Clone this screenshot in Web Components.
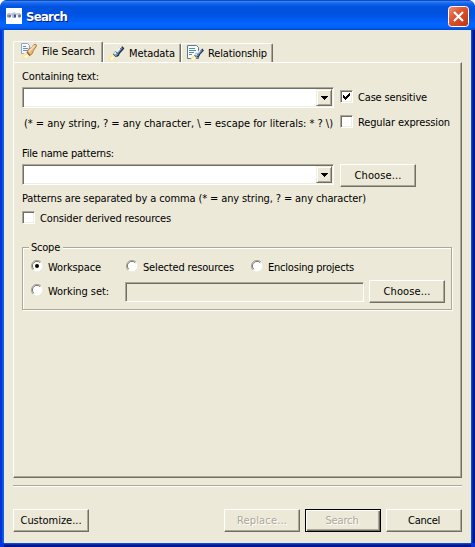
<!DOCTYPE html>
<html lang="en"><head><meta charset="utf-8"><title>Search</title>
<style>
html,body{margin:0;background:#fff;overflow:hidden}
body{font:11px/14px "DejaVu Sans Condensed","DejaVu Sans",sans-serif;font-stretch:condensed;color:#000}
</style></head><body>
<search-dialog></search-dialog>
<script>
const define=(name,html,init)=>customElements.define(name,class extends HTMLElement{
  connectedCallback(){
    if(this.shadowRoot)return;
    this.attachShadow({mode:'open'}).innerHTML=html;
    if(init)init.call(this,this.shadowRoot);
  }
});

/* text label whose tracking is adjusted to a given width */
define('fit-text',`<style>:host{display:block;white-space:pre;flex:none}span{display:inline-block}</style><span></span>`,function(r){
  const s=r.querySelector('span'),t=this.getAttribute('text'),w=+this.getAttribute('w');
  s.textContent=t;
  this.style.width=w+'px';
  const n=s.getBoundingClientRect().width;
  s.style.letterSpacing=((w-n)/t.length)+'px';
});

define('push-button',`<style>
:host{display:flex;box-sizing:border-box;width:76px;height:23px;align-items:center;justify-content:center;flex:none;background:#ece9d8;border:1px solid;border-color:#fff #716f64 #716f64 #fff;box-shadow:inset -1px -1px #aca899}
:host([disabled]){color:#aca899;text-shadow:1px 1px #fff}
:host([default]){border-color:#000;box-shadow:inset 1px 1px #fff,inset -1px -1px #716f64,inset -2px -2px #aca899}
</style><slot></slot>`);

define('combo-box',`<style>
:host{display:flex;box-sizing:border-box;width:312px;height:21px;flex:none;background:#fff;border:1px solid;border-color:#aca899 #fff #fff #aca899;box-shadow:inset 1px 1px #716f64,inset -1px -1px #f1efe2;padding:1px;justify-content:flex-end}
i{box-sizing:border-box;width:16px;height:17px;background:#ece9d8;border:1px solid;border-color:#f1efe2 #716f64 #716f64 #f1efe2;box-shadow:inset 1px 1px #fff,inset -1px -1px #aca899;display:flex;align-items:center;justify-content:center}
</style><i><svg width="7" height="4" shape-rendering="crispEdges"><path d="M0 0H7V1H6V2H5V3H4V4H3V3H2V2H1V1H0Z"/></svg></i>`);

define('check-option',`<style>
:host{display:flex;align-items:center;gap:5px;flex:none;height:14px}
b{box-sizing:border-box;width:13px;height:13px;margin-top:-3px;background:#fff;border:1px solid;border-color:#aca899 #fff #fff #aca899;box-shadow:inset 1px 1px #716f64,inset -1px -1px #f1efe2}
svg{display:none}:host([checked]) svg{display:block}
</style><b><svg width="11" height="11" shape-rendering="crispEdges"><path d="M2 4h1v1h1v1h1v-1h1v-1h1v-1h1v-1h1v3h-1v1h-1v1h-1v1h-1v1h-1v-1h-1v-1h-1z"/></svg></b><slot></slot>`);

define('radio-option',`<style>
:host{display:flex;align-items:center;gap:5px;flex:none;height:14px}
svg{display:block;margin-top:-4px}circle.dot{display:none}:host([checked]) .dot{display:inline}
</style><svg width="12" height="12"><circle cx="6" cy="6" r="5.4" fill="#fff"/><path d="M2 10A5.5 5.5 0 0 1 10 2" fill="none" stroke="#aca899"/><path d="M2.7 9.2A4.5 4.5 0 0 1 9.2 2.7" fill="none" stroke="#716f64"/><circle class="dot" cx="6" cy="6" r="2"/></svg><slot></slot>`);

define('group-box',`<style>
:host{display:block;box-sizing:border-box;border:1px solid #aca899;box-shadow:1px 1px #fff,inset 1px 1px #fff;position:relative}
slot[name=title]{display:block;position:absolute;left:6px;top:-6px;background:#ece9d8;padding:0 3px 0 2px;line-height:12px}
</style><slot name="title"></slot><slot></slot>`);

const torch='<path d="M0 15L2 11L5 9L8 12L5 15L2 16Z" fill="#fbe79a"/><path d="M2 14L5 11L6 13L4 15Z" fill="#fffce6"/><path d="M5 9L7 6.5L9.5 6.5L13.5 1.5L15.5 3.5L11 8.5L10 11L8 12Z" fill="#7f9fc0"/><path d="M6.5 9L12.8 2.2" stroke="#eef8fc" stroke-width="1.6"/><path d="M8.5 11.5L10.5 10L11.2 8.2L15.5 3.5L14 1.7" fill="none" stroke="#1d2c48" stroke-width="1.3"/><path d="M5.2 9L8 12M7.5 6.5L10.5 9.2M12 2.8L14.2 5" stroke="#42566c" stroke-width=".9"/>';
const icons={
  file:'<path d="M.5 .5h6l2 2v8h-8z" fill="#f4f8ff" stroke="#8fa5ca"/><path d="M2 3.5h3M2 5.5h5M2 7.5h5" stroke="#6c8dbb"/><path d="M1 14L3 10L6 9L9 13L6 15L3 16Z" fill="#fbe79a"/><path d="M3 14L6 11L7 13L5 15Z" fill="#fffce6"/><path d="M6 9L8 5.5L10.5 5L13 1.5Q15.500 .5 15.500 3L12.500 7.500L11 11L8.500 12.500Z" fill="#e9b878" stroke="#ad7948" stroke-width=".9"/><path d="M8 8.500L13.500 2.500" stroke="#ffe6bd" stroke-width="1.3"/><path d="M6 9L9 12.500" stroke="#8d6a58" stroke-width="1.2"/>',
  meta:torch,
  relation:'<path d="M.5 .5h9l2 2v11h-11z" fill="#f6fcff" stroke="#61788a"/><path d="M2 3.500h6M2 5.500h7M2 7.500h5M2 9.500h3" stroke="#568d99"/><g transform="translate(3 2.500) scale(.85)">'+torch+'</g>'
};
define('tab-icon',`<style>:host{display:block;width:17px;height:17px;flex:none}svg{display:block}</style><svg width="17" height="17"></svg>`,function(r){
  r.querySelector('svg').innerHTML=icons[this.getAttribute('kind')];
});

define('tab-item',`<style>
:host{display:flex;box-sizing:border-box;height:19px;flex:none;padding:1px 0 0 4px;gap:4px;border-top:1px solid #fff;border-left:1px solid #fff;border-right:1px solid #716f64;box-shadow:inset -1px 0 #aca899;border-radius:2px 2px 0 0}
:host([selected]){height:22px;padding:1px 0 0 7px;background:#ece9d8;margin-bottom:-1px}
slot{display:block}
div{padding-top:2px}
</style><slot name="icon"></slot><div><slot></slot></div>`);

define('title-bar',`<style>
:host{display:flex;box-sizing:border-box;height:30px;padding:6px 6px 0;color:#fff;background:linear-gradient(#0831a0 0,#2f82f5 5%,#1666ee 11%,#0053df 22%,#0052df 45%,#0058ec 60%,#0365fd 78%,#0364fb 90%,#0048cd 100%);border-radius:7px 7px 0 0}
.app{display:block;margin-top:2px;flex:none}
.name{flex:1;padding:3px 0 0 4px;font:bold 13px/16px "DejaVu Sans Condensed",sans-serif;text-shadow:1px 1px #0a1883}
</style>
<svg class="app" width="16" height="16"><path fill="#fff" d="M0 0h16v16H0z"/><path d="M1 7Q3 4.500 5.500 6.500Q8 3.500 10.500 6.500Q13 4.500 15 7" fill="none" stroke="#c4c8d6" stroke-width="1.5"/><ellipse cx="3" cy="8" rx="2.200" ry="1.700" fill="#8d93ab"/><ellipse cx="7.800" cy="7.800" rx="2" ry="2.200" fill="#aebbd4"/><ellipse cx="9" cy="8" rx="1" ry="1.800" fill="#2f4080"/><ellipse cx="13.300" cy="8" rx="1.700" ry="1.700" fill="#7b9abd"/><path d="M4 7v2M14 7v2" stroke="#46527d"/></svg>
<div class="name"><fit-text text="Search" w="41"></fit-text></div>
<svg width="21" height="21"><defs><linearGradient id="g" x2="1" y2="1"><stop stop-color="#ed967c"/><stop offset=".4" stop-color="#df5431"/><stop offset="1" stop-color="#bd3210"/></linearGradient></defs><rect x=".5" y=".5" width="20" height="20" rx="3" fill="url(#g)" stroke="#fff"/><path d="M6 6L15 15M15 6L6 15" stroke="#fff" stroke-width="2.2"/></svg>`);

define('search-dialog',`<style>
:host{display:flex;flex-direction:column;box-sizing:border-box;width:475px;height:547px;border-radius:7px 7px 0 0;background:#0831d9;overflow:hidden}
main{display:flex;flex-direction:column;box-sizing:border-box;width:467px;height:513px;margin-left:4px;background:#ece9d8;padding:11px 9px 0;box-shadow:-1px 0 #0b62ee,-2px 0 #0855dd,1px 0 #0b50d4,2px 0 #0528b5,4px 0 #001590,0 1px #0b4cdd,0 2px #0528b5,0 4px #001590}
.tabs{display:flex;align-items:flex-end;height:21px;flex:none}
.page{display:flex;flex-direction:column;box-sizing:border-box;height:416px;flex:none;border:1px solid;border-color:#fff #716f64 #716f64 #fff;box-shadow:inset -1px -1px #aca899;padding:7px 9px 0 8px}
.row{display:flex;flex:none}
group-box{width:430px;height:63px;margin-top:21px;padding:13px 6px 0 8px;flex:none}
.field{box-sizing:border-box;width:239px;height:20px;border:1px solid;border-color:#aca899 #fff #fff #aca899;box-shadow:inset 1px 1px #716f64}
hr{margin:7px 0 0;border:0;height:1px;flex:none;background:#aca899;box-shadow:0 1px #fff}
.actions{display:flex;gap:5px;margin-top:23px}
.grow{flex:1}
</style>
<title-bar></title-bar>
<main>
<div class="tabs">
<tab-item selected style="width:90px"><tab-icon slot="icon" kind="file"></tab-icon><fit-text text="File Search" w="53"></fit-text></tab-item>
<tab-item style="width:78px"><tab-icon slot="icon" kind="meta"></tab-icon><fit-text text="Metadata" w="46"></fit-text></tab-item>
<tab-item style="width:92px;padding-left:5px"><tab-icon slot="icon" kind="relation"></tab-icon><fit-text text="Relationship" w="59"></fit-text></tab-item>
</div>
<section class="page">
<fit-text text="Containing text:" w="77"></fit-text>
<div class="row" style="margin-top:3px;gap:6px"><combo-box></combo-box><check-option checked style="margin-top:4px"><fit-text text="Case sensitive" w="69"></fit-text></check-option></div>
<div class="row" style="margin-top:8px;gap:7px;padding-left:2px"><fit-text text="(* = any string, ? = any character, \\ = escape for literals: * ? \\)" w="309" style="padding-top:1px"></fit-text><check-option><fit-text text="Regular expression" w="92"></fit-text></check-option></div>
<fit-text text="File name patterns:" w="92" style="margin-top:16px"></fit-text>
<div class="row" style="margin-top:3px;gap:6px"><combo-box></combo-box><push-button><fit-text text="Choose..." w="47"></fit-text></push-button></div>
<fit-text text="Patterns are separated by a comma (* = any string, ? = any character)" w="344" style="margin-top:5px"></fit-text>
<check-option style="margin-top:6px"><fit-text text="Consider derived resources" w="131"></fit-text></check-option>
<group-box><fit-text slot="title" text="Scope" w="29"></fit-text>
<div class="row"><radio-option checked style="width:95px"><fit-text text="Workspace" w="53"></fit-text></radio-option><radio-option style="width:125px"><fit-text text="Selected resources" w="91"></fit-text></radio-option><radio-option><fit-text text="Enclosing projects" w="86"></fit-text></radio-option></div>
<div class="row" style="margin-top:5px"><radio-option style="width:94px;margin-top:5px"><fit-text text="Working set:" w="61"></fit-text></radio-option><div class="field" style="margin-top:2px"></div><div class="grow"></div><push-button><fit-text text="Choose..." w="47"></fit-text></push-button></div>
</group-box>
</section>
<hr>
<div class="actions"><push-button><fit-text text="Customize..." w="61"></fit-text></push-button><div class="grow"></div><push-button disabled><fit-text text="Replace..." w="50"></fit-text></push-button><push-button disabled default style="padding-right:2px"><fit-text text="Search" w="33"></fit-text></push-button><push-button><fit-text text="Cancel" w="32"></fit-text></push-button></div>
</main>`);
</script></body></html>
